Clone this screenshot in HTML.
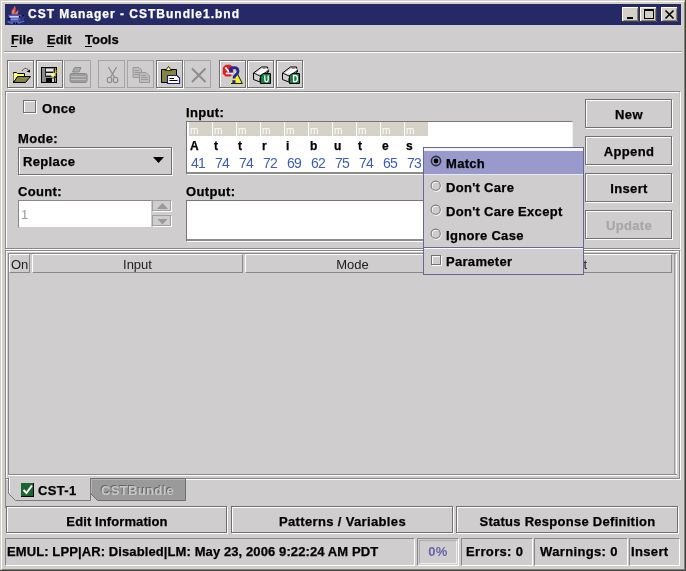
<!DOCTYPE html>
<html><head><meta charset="utf-8">
<style>
*{margin:0;padding:0;box-sizing:border-box}
html,body{width:686px;height:571px;overflow:hidden;background:#d4d0c8}
body{position:relative;will-change:transform;font-family:"Liberation Sans",sans-serif;font-size:13px;color:#000}
.a{position:absolute}
.t{position:absolute;white-space:nowrap;line-height:1}
.b{font-weight:bold;letter-spacing:0.35px;-webkit-text-stroke:0.25px currentColor}
/* etched: dark rect + white rect offset */
.etch{position:absolute}
.etch:before,.etch:after{content:"";position:absolute}
.etch:before{left:1px;top:1px;right:0;bottom:0;border:1px solid #fff}
.etch:after{left:0;top:0;right:1px;bottom:1px;border:1px solid #888}
.btn{position:absolute}
.btn:before{content:"";position:absolute;left:1px;top:1px;right:0;bottom:0;border:1px solid #fff}
.btn:after{content:"";position:absolute;left:0;top:0;right:1px;bottom:1px;border:1px solid #707070}
.lbl{position:absolute;left:0;right:0;text-align:center;font-weight:bold;letter-spacing:0.35px;-webkit-text-stroke:0.25px currentColor;white-space:nowrap;line-height:1;z-index:2}
</style></head><body>
<!-- window frame -->
<div class="a" style="left:0;top:0;width:686px;height:571px;border-right:1px solid #404040;border-bottom:1px solid #404040"></div>
<div class="a" style="left:1px;top:1px;width:684px;height:569px;border-left:1px solid #fff;border-top:1px solid #fff;border-right:1px solid #808080;border-bottom:1px solid #808080"></div>
<!-- client -->
<div class="a" style="left:4px;top:25px;width:678px;height:542px;background:#cfcdcd"></div>
<!-- title bar -->
<div class="a" style="left:5px;top:4px;width:676px;height:21px;background:#252a66"></div>
<div class="t b" style="left:28px;top:8px;font-size:12px;letter-spacing:1px;color:#fff">CST Manager - CSTBundle1.bnd</div>


<svg class="a" style="left:0;top:0;z-index:3" width="686" height="52">
<!-- java cup -->
<path d="M12 14.5Q10.5 11.5 12.5 9.5Q14 8 14.6 5.5Q16.5 8 15.5 10.5Q15 12 16 13Q17 11 18.3 9.5Q18.8 12 17.5 14.5Z" fill="#e05a48"/>
<path d="M13 13.5Q12.5 11.5 14 10M16.5 13.5Q16.5 12.2 17.6 11" stroke="#f7b090" stroke-width="0.7" fill="none"/>
<path d="M8 15Q14 13.5 21.5 15L19 22H11Z" fill="#4c58b8"/>
<path d="M9.5 16.8H19.5" stroke="#d8dcff" stroke-width="1.4"/>
<path d="M11 19.3H18" stroke="#8a96dc" stroke-width="1.2"/>
<path d="M20 17Q23 15 23.8 16Q24.5 18.5 19.5 20.5" fill="none" stroke="#3a46a8" stroke-width="1.2"/>
<circle cx="23.2" cy="15.6" r="0.9" fill="#000"/><circle cx="19.6" cy="16.8" r="0.9" fill="#000"/>
<circle cx="9.4" cy="18.6" r="0.9" fill="#000"/>
<path d="M7.5 21.5Q15 25.5 24 21" fill="none" stroke="#5a66c4" stroke-width="1.6"/>
<circle cx="14" cy="23.3" r="0.9" fill="#000"/><circle cx="16.6" cy="23.3" r="0.9" fill="#000"/>
<!-- window buttons -->
<g>
<rect x="622" y="7" width="17" height="15" fill="#d4d0c8"/>
<path d="M622.5 21.5V7.5H638.5" fill="none" stroke="#fff"/>
<path d="M622 21.5H638.5V7" fill="none" stroke="#404040"/>
<path d="M623.5 20.5H637.5V8.5" fill="none" stroke="#808080"/>
<rect x="627" y="17" width="6" height="2" fill="#000"/>
</g>
<g>
<rect x="640" y="7" width="17" height="15" fill="#d4d0c8"/>
<path d="M640.5 21.5V7.5H656.5" fill="none" stroke="#fff"/>
<path d="M640 21.5H656.5V7" fill="none" stroke="#404040"/>
<path d="M641.5 20.5H655.5V8.5" fill="none" stroke="#808080"/>
<rect x="644.5" y="9.5" width="9" height="9" fill="none" stroke="#000"/><rect x="644" y="9" width="10" height="2" fill="#000"/>
</g>
<g>
<rect x="661" y="7" width="17" height="15" fill="#d4d0c8"/>
<path d="M661.5 21.5V7.5H677.5" fill="none" stroke="#fff"/>
<path d="M661 21.5H677.5V7" fill="none" stroke="#404040"/>
<path d="M662.5 20.5H676.5V8.5" fill="none" stroke="#808080"/>
<path d="M665.5 10.5L673.5 18.5M673.5 10.5L665.5 18.5" stroke="#000" stroke-width="1.7"/>
</g>
<!-- menu underlines -->
<rect x="11" y="46" width="6" height="1" fill="#000"/>
<rect x="47" y="46" width="7" height="1" fill="#000"/>
<rect x="85" y="46" width="7" height="1" fill="#000"/>
</svg>

<!-- menu -->
<div class="t b" style="left:11px;top:33px;letter-spacing:0">File</div>
<div class="t b" style="left:47px;top:33px;letter-spacing:0">Edit</div>
<div class="t b" style="left:85px;top:33px;letter-spacing:0">Tools</div>
<div class="a" style="left:4px;top:51px;width:678px;height:1px;background:#999"></div>
<div class="a" style="left:4px;top:52px;width:678px;height:1px;background:#fff"></div>

<!-- toolbar buttons -->
<div class="btn" style="left:7px;top:60px;width:28px;height:29px"></div>
<div class="btn" style="left:36px;top:60px;width:28px;height:29px"></div>
<div class="a" style="left:64px;top:60px;width:27px;height:28px;border:1px solid #a4a4a4"></div>
<div class="a" style="left:98px;top:60px;width:27px;height:28px;border:1px solid #a4a4a4"></div>
<div class="a" style="left:127px;top:60px;width:27px;height:28px;border:1px solid #a4a4a4"></div>
<div class="btn" style="left:156px;top:60px;width:28px;height:29px"></div>
<div class="a" style="left:184px;top:60px;width:27px;height:28px;border:1px solid #a4a4a4"></div>
<div class="btn" style="left:219px;top:60px;width:28px;height:29px"></div>
<div class="btn" style="left:247px;top:60px;width:28px;height:29px"></div>
<div class="btn" style="left:276px;top:60px;width:28px;height:29px"></div>
<svg class="a" style="left:0;top:0;z-index:3" width="320" height="95" shape-rendering="geometricPrecision">
<!-- open folder -->
<path d="M13.5 72.5H16.5L17.5 73.5H24.5V76.5H18L13.5 82.5Z" fill="#ffff70" stroke="#000"/>
<path d="M14 73.5V81" stroke="#ffffe0" stroke-width="1"/>
<path d="M17.5 76.5H30.5L25.5 82.5H13.5Z" fill="#84843c" stroke="#000"/>
<path d="M22 71Q25 66.5 28.5 70" fill="none" stroke="#222" stroke-width="1" stroke-dasharray="1.4 0.6"/>
<path d="M26.5 71.5L30 69.5L30 72.5Z" fill="#000"/>
<!-- save -->
<rect x="41" y="67" width="16" height="16" fill="#000"/>
<rect x="42" y="68" width="14" height="14" fill="#8a8a8a"/>
<rect x="45" y="68" width="1" height="8" fill="#222"/>
<rect x="46" y="69" width="7" height="2" fill="#e8e8e8"/>
<rect x="46" y="72" width="7" height="1" fill="#111"/>
<rect x="46" y="73" width="7" height="2" fill="#e0e0e0"/>
<rect x="45" y="76" width="9" height="1" fill="#222"/>
<rect x="46" y="78" width="6" height="5" fill="#000"/>
<rect x="52" y="79" width="2" height="3" fill="#d0d0d0"/>
<rect x="54" y="68" width="1" height="14" fill="#222"/>
<path d="M59.5 68.5L54 74" stroke="#e8e820" stroke-width="1.6" stroke-dasharray="1.3 0.9"/>
<circle cx="53" cy="75" r="2" fill="#ffff80"/>
<path d="M54.5 76.5L56 77.5" stroke="#000" stroke-width="1"/>
<!-- printer disabled -->
<path d="M74.5 67.5H81L79 72H72.5Z" fill="#a8a8a8" stroke="#8c8c8c"/>
<path d="M71 73.5Q70 73.5 70 75V80.5Q70 82.5 72 82.5H85.5Q87 82.5 87 80.5V75Q87 73.5 85.5 73.5Z" fill="#9c9c9c" stroke="#8c8c8c"/>
<path d="M71 76.5H86M71 79.5H86" stroke="#bbb"/>
<!-- scissors disabled -->
<path d="M108.5 67L114.5 77.5M116.5 67L110.5 77.5" stroke="#8c8c8c" stroke-width="1.2" fill="none"/>
<ellipse cx="109.5" cy="80" rx="2.3" ry="2.7" fill="none" stroke="#8c8c8c" stroke-width="1.1"/>
<ellipse cx="115.5" cy="80" rx="2.3" ry="2.7" fill="none" stroke="#8c8c8c" stroke-width="1.1"/>
<!-- copy disabled -->
<path d="M133 67.5H139L141.5 70V77.5H133Z" fill="#bdbdbd" stroke="#9a9a9a"/>
<path d="M134.5 70.5H139M134.5 72.5H140M134.5 74.5H140" stroke="#9a9a9a"/>
<path d="M139.5 72.5H146L149.5 76V82.5H139.5Z" fill="#bdbdbd" stroke="#9a9a9a"/>
<path d="M141 75.5H146M141 77.5H148M141 79.5H148" stroke="#9a9a9a"/>
<!-- paste -->
<path d="M161.5 69.5H176.5V82.5H161.5Z" fill="#84843c" stroke="#000"/>
<path d="M165.5 70.5L168.5 66.5L171.5 70.5Z" fill="#ffff80" stroke="#000" stroke-width="0.8"/>
<path d="M167.5 75.5H177L179.5 78V83.5H167.5Z" fill="#fff" stroke="#1a1a80" stroke-width="1.2"/>
<path d="M169.5 78.5H174M169.5 80.5H177.5" stroke="#000"/>
<!-- delete disabled -->
<path d="M192 68.5L205.5 82M205.5 68.5L192 82" stroke="#8c8c8c" stroke-width="2"/>
<!-- icon 8 -->
<path d="M225.6 64.7H230.4L233.2 67.5V73.8L230.4 76.6H225.6L222.8 73.8V67.5Z" fill="#e41c1c"/>
<path d="M226 68.2L228.8 71.8M225.8 73.4H231.8" stroke="#fff" stroke-width="1.8" fill="none"/>
<circle cx="225.9" cy="68.1" r="1.1" fill="#fff"/><circle cx="232" cy="73.4" r="1.1" fill="#fff"/>
<path d="M229.5 83.5L237.7 74.3L242.3 83.5Z" fill="#f2f224"/>
<path d="M237.7 74.3L242.3 83.5H231" fill="none" stroke="#000" stroke-width="0.9"/>
<path d="M230.3 71Q230.3 67.6 234 67.6Q238 67.6 238 71.2Q238 73.6 235.8 75Q234 76.2 234 78.6" fill="none" stroke="#222a8c" stroke-width="2.8"/>
<rect x="229.5" y="70" width="3.2" height="2.6" fill="#222a8c"/>
<rect x="232.3" y="80.2" width="3.2" height="3.2" fill="#222a8c"/>
<!-- icon 9/10 -->
<g id="dev">
<path d="M253.5 73L261.5 67H267.5L268.5 72L260 78V82L253.5 79.5Z" fill="#d2d2d2" stroke="#000" stroke-width="1"/><path d="M257 73.5L262.5 69.5H266.5L260 74" stroke="#fff" stroke-width="1.6" fill="none"/>
<path d="M253.5 73L260 76L268 71" fill="none" stroke="#000" stroke-width="0.9"/>
<path d="M263 68.5L266 68" stroke="#888" stroke-width="1.2"/>
<path d="M263 73.5H270.5V83.5H260.5V76Z" fill="#168040" stroke="#000" stroke-width="1"/>
</g>
<path d="M264.8 75.5V80Q264.8 81.8 266.5 81.8Q268.2 81.8 268.2 80V75.5" fill="none" stroke="#fff" stroke-width="1.3"/>
<g transform="translate(29,0)">
<path d="M253.5 73L261.5 67H267.5L268.5 72L260 78V82L253.5 79.5Z" fill="#d2d2d2" stroke="#000" stroke-width="1"/><path d="M257 73.5L262.5 69.5H266.5L260 74" stroke="#fff" stroke-width="1.6" fill="none"/>
<path d="M253.5 73L260 76L268 71" fill="none" stroke="#000" stroke-width="0.9"/>
<path d="M263 68.5L266 68" stroke="#888" stroke-width="1.2"/>
<path d="M263 73.5H270.5V83.5H260.5V76Z" fill="#168040" stroke="#000" stroke-width="1"/>
<path d="M264.6 75.5V81.7H266.3Q268.4 81.7 268.4 78.6Q268.4 75.5 266.3 75.5Z" fill="none" stroke="#fff" stroke-width="1.3"/>
</g>
</svg>

<!-- top panel -->
<div class="etch" style="left:5px;top:91px;width:676px;height:159px"></div>
<div class="a" style="left:679px;top:92px;width:1px;height:156px;background:#c4c4c4"></div>


<!-- top panel contents -->
<div class="btn" style="left:23px;top:100px;width:14px;height:14px"></div>
<div class="t b" style="left:42px;top:102px">Once</div>
<div class="t b" style="left:18px;top:132px">Mode:</div>
<div class="btn" style="left:18px;top:147px;width:155px;height:29px"></div>
<div class="t b" style="left:23px;top:155px">Replace</div>
<svg class="a" style="left:153px;top:157px" width="12" height="7"><path d="M0 0H11L5.5 6Z" fill="#000"/></svg>
<div class="t b" style="left:18px;top:185px">Count:</div>
<div class="a" style="left:18px;top:200px;width:134px;height:28px;background:#fff;border-left:1px solid #888;border-top:1px solid #888;border-right:1px solid #ccc;border-bottom:1px solid #ccc"></div>
<div class="t" style="left:21px;top:208px;color:#999">1</div>
<div class="a" style="left:153px;top:201px;width:19px;height:11px;border-right:1px solid #fff;border-bottom:1px solid #fff"></div>
<div class="a" style="left:152px;top:200px;width:19px;height:11px;border:1px solid #a0a0a0"></div>
<div class="a" style="left:153px;top:216px;width:19px;height:11px;border-right:1px solid #fff;border-bottom:1px solid #fff"></div>
<div class="a" style="left:152px;top:215px;width:19px;height:11px;border:1px solid #a0a0a0"></div>
<svg class="a" style="left:156px;top:202px" width="13" height="8"><path d="M1 7H12L6.5 1Z" fill="#999"/></svg>
<svg class="a" style="left:156px;top:218px" width="13" height="8"><path d="M1.5 1H11.5L6.5 6.5Z" fill="#999"/></svg>

<div class="t b" style="left:186px;top:106px">Input:</div>
<div class="a" style="left:186px;top:121px;width:387px;height:54px;background:#fff;border-left:1px solid #777;border-top:1px solid #777;border-right:1px solid #eee;border-bottom:1px solid #fff;box-shadow:inset 0 -2px 0 #8c8c8c"></div>
<div class="t b" style="left:186px;top:185px">Output:</div>
<div class="a" style="left:186px;top:200px;width:387px;height:42px;background:#fff;border-left:1px solid #777;border-top:1px solid #777;border-right:1px solid #eee;border-bottom:1px solid #fff;box-shadow:inset 0 -2px 0 #8c8c8c"></div>
<div class="a" style="left:189px;top:122px;width:23px;height:14px;background:#d6d2ca"></div><div class="t" style="left:190px;top:126px;font-size:10px;color:#fff">m</div><div class="t b" style="left:190px;top:140px;font-size:12px">A</div><div class="t" style="left:191px;top:156px;font-size:14px;letter-spacing:-0.7px;color:#3c5cb8">41</div>
<div class="a" style="left:213px;top:122px;width:23px;height:14px;background:#d6d2ca"></div><div class="t" style="left:214px;top:126px;font-size:10px;color:#fff">m</div><div class="t b" style="left:214px;top:140px;font-size:12px">t</div><div class="t" style="left:215px;top:156px;font-size:14px;letter-spacing:-0.7px;color:#3c5cb8">74</div>
<div class="a" style="left:237px;top:122px;width:23px;height:14px;background:#d6d2ca"></div><div class="t" style="left:238px;top:126px;font-size:10px;color:#fff">m</div><div class="t b" style="left:238px;top:140px;font-size:12px">t</div><div class="t" style="left:239px;top:156px;font-size:14px;letter-spacing:-0.7px;color:#3c5cb8">74</div>
<div class="a" style="left:261px;top:122px;width:23px;height:14px;background:#d6d2ca"></div><div class="t" style="left:262px;top:126px;font-size:10px;color:#fff">m</div><div class="t b" style="left:262px;top:140px;font-size:12px">r</div><div class="t" style="left:263px;top:156px;font-size:14px;letter-spacing:-0.7px;color:#3c5cb8">72</div>
<div class="a" style="left:285px;top:122px;width:23px;height:14px;background:#d6d2ca"></div><div class="t" style="left:286px;top:126px;font-size:10px;color:#fff">m</div><div class="t b" style="left:286px;top:140px;font-size:12px">i</div><div class="t" style="left:287px;top:156px;font-size:14px;letter-spacing:-0.7px;color:#3c5cb8">69</div>
<div class="a" style="left:309px;top:122px;width:23px;height:14px;background:#d6d2ca"></div><div class="t" style="left:310px;top:126px;font-size:10px;color:#fff">m</div><div class="t b" style="left:310px;top:140px;font-size:12px">b</div><div class="t" style="left:311px;top:156px;font-size:14px;letter-spacing:-0.7px;color:#3c5cb8">62</div>
<div class="a" style="left:333px;top:122px;width:23px;height:14px;background:#d6d2ca"></div><div class="t" style="left:334px;top:126px;font-size:10px;color:#fff">m</div><div class="t b" style="left:334px;top:140px;font-size:12px">u</div><div class="t" style="left:335px;top:156px;font-size:14px;letter-spacing:-0.7px;color:#3c5cb8">75</div>
<div class="a" style="left:357px;top:122px;width:23px;height:14px;background:#d6d2ca"></div><div class="t" style="left:358px;top:126px;font-size:10px;color:#fff">m</div><div class="t b" style="left:358px;top:140px;font-size:12px">t</div><div class="t" style="left:359px;top:156px;font-size:14px;letter-spacing:-0.7px;color:#3c5cb8">74</div>
<div class="a" style="left:381px;top:122px;width:23px;height:14px;background:#d6d2ca"></div><div class="t" style="left:382px;top:126px;font-size:10px;color:#fff">m</div><div class="t b" style="left:382px;top:140px;font-size:12px">e</div><div class="t" style="left:383px;top:156px;font-size:14px;letter-spacing:-0.7px;color:#3c5cb8">65</div>
<div class="a" style="left:405px;top:122px;width:23px;height:14px;background:#d6d2ca"></div><div class="t" style="left:406px;top:126px;font-size:10px;color:#fff">m</div><div class="t b" style="left:406px;top:140px;font-size:12px">s</div><div class="t" style="left:407px;top:156px;font-size:14px;letter-spacing:-0.7px;color:#3c5cb8">73</div>
<div class="btn" style="left:585px;top:99px;width:88px;height:30px"><div class="lbl" style="top:9px;">New</div></div>
<div class="btn" style="left:585px;top:136px;width:88px;height:30px"><div class="lbl" style="top:9px;">Append</div></div>
<div class="btn" style="left:585px;top:173px;width:88px;height:30px"><div class="lbl" style="top:9px;">Insert</div></div>
<div class="btn" style="left:585px;top:210px;width:88px;height:30px"><div class="lbl" style="top:9px;color:#a8a8a8;">Update</div></div>

<!-- panel 2 -->
<div class="etch" style="left:5px;top:250px;width:676px;height:230px"></div>
<div class="a" style="left:8px;top:478px;width:83px;height:2px;background:#cfcdcd"></div>
<div class="a" style="left:5px;top:478px;width:1px;height:30px;background:#888"></div>


<!-- table -->
<div class="a" style="left:8px;top:253px;width:669px;height:222px;border-left:1px solid #888;border-top:1px solid #888;border-right:1px solid #fff"></div>
<div class="a" style="left:674px;top:254px;width:1px;height:220px;background:#999"></div>
<div class="a" style="left:9px;top:254px;width:21px;height:19px;border-left:1px solid #fff;border-top:1px solid #fff;border-right:1px solid #888;border-bottom:1px solid #888"></div>
<div class="a" style="left:32px;top:254px;width:211px;height:19px;border-left:1px solid #fff;border-top:1px solid #fff;border-right:1px solid #888;border-bottom:1px solid #888"></div>
<div class="a" style="left:245px;top:254px;width:215px;height:19px;border-left:1px solid #fff;border-top:1px solid #fff;border-right:1px solid #888;border-bottom:1px solid #888"></div>
<div class="a" style="left:462px;top:254px;width:210px;height:19px;border-left:1px solid #fff;border-top:1px solid #fff;border-right:1px solid #888;border-bottom:1px solid #888"></div>
<div class="t" style="left:11px;top:258px;color:#222">On</div>
<div class="t" style="left:32px;top:258px;width:211px;text-align:center;color:#222">Input</div>
<div class="t" style="left:245px;top:258px;width:215px;text-align:center;color:#222">Mode</div>
<div class="t" style="left:462px;top:258px;width:211px;text-align:center;color:#222">Output</div>
<div class="a" style="left:8px;top:474px;width:669px;height:1px;background:#888"></div>
<div class="a" style="left:8px;top:475px;width:669px;height:1px;background:#fff"></div>
<!-- tabs -->
<svg class="a" style="left:0;top:470px" width="200" height="40">
 <path d="M90.5 8.5H185.5V30.5H97.5L90.5 23.5Z" fill="#9a9a9a" stroke="#6e6e6e" stroke-width="1"/>
 <path d="M91.5 23V9.5H185" fill="none" stroke="#b4b4b4" stroke-width="1"/>
 <path d="M8.5 8V23.5L15.5 30.5H90.5V8" fill="#cfcdcd" stroke="#7a7a7a" stroke-width="1"/>
 <path d="M9.5 8V23" fill="none" stroke="#fff" stroke-width="1"/>
</svg>
<div class="a" style="left:21px;top:483px;width:13px;height:14px;background:#000"></div>
<div class="a" style="left:21px;top:483px;width:12px;height:13px;background:#1a6430"></div>
<svg class="a" style="left:21px;top:483px" width="13" height="13"><path d="M2.5 7L5.5 10L11 2.5" fill="none" stroke="#fff" stroke-width="2"/></svg>
<div class="t b" style="left:38px;top:484px">CST-1</div>
<div class="t b" style="left:100px;top:483px;color:#666;-webkit-text-stroke:0">CSTBundle</div>
<div class="t b" style="left:101px;top:484px;color:#c8c8c8;-webkit-text-stroke:0">CSTBundle</div>

<!-- status bar -->
<div class="a" style="left:5px;top:538px;width:410px;height:28px;border-left:1px solid #888;border-top:1px solid #888;border-right:1px solid #fff;border-bottom:1px solid #fff"></div><div class="t b" style="left:7px;top:545px;letter-spacing:0.1px">EMUL: LPP|AR: Disabled|LM: May 23, 2006 9:22:24 AM PDT</div>
<div class="a" style="left:461px;top:538px;width:72px;height:28px;border-left:1px solid #888;border-top:1px solid #888;border-right:1px solid #fff;border-bottom:1px solid #fff"></div><div class="t b" style="left:466px;top:545px">Errors: 0</div>
<div class="a" style="left:534px;top:538px;width:94px;height:28px;border-left:1px solid #888;border-top:1px solid #888;border-right:1px solid #fff;border-bottom:1px solid #fff"></div><div class="t b" style="left:540px;top:545px">Warnings: 0</div>
<div class="a" style="left:629px;top:538px;width:51px;height:28px;border-left:1px solid #888;border-top:1px solid #888;border-right:1px solid #fff;border-bottom:1px solid #fff"></div><div class="t b" style="left:631px;top:545px">Insert</div>
<div class="a" style="left:417px;top:538px;width:42px;height:28px;border-left:1px solid #888;border-top:1px solid #888;border-right:1px solid #fff;border-bottom:1px solid #fff"></div><div class="a" style="left:419px;top:540px;width:38px;height:24px;border-left:1px solid #aaa;border-top:1px solid #aaa;border-right:1px solid #eee;border-bottom:1px solid #eee"></div><div class="t b" style="left:417px;top:545px;width:42px;text-align:center;color:#6464a8;-webkit-text-stroke:0">0%</div>

<!-- bottom buttons -->
<div class="btn" style="left:6px;top:506px;width:222px;height:28px"><div class="lbl" style="top:9px;letter-spacing:0.1px">Edit Information</div></div>
<div class="btn" style="left:231px;top:506px;width:223px;height:28px"><div class="lbl" style="top:9px">Patterns / Variables</div></div>
<div class="btn" style="left:456px;top:506px;width:223px;height:28px"><div class="lbl" style="top:9px;letter-spacing:0.27px">Status Response Definition</div></div>


<!-- popup -->
<div class="a" style="left:423px;top:147px;width:161px;height:128px;background:#cfcdcd;border:1px solid #666699;z-index:10">
 <div class="a" style="left:0;top:0;width:159px;height:3px;background:#f4f4fa"></div>
 <div class="a" style="left:0;top:3px;width:159px;height:23px;background:#9999cc"></div>
 <div class="a" style="left:0;top:26px;width:159px;height:1px;background:#e8e8f0"></div>
 <div class="a" style="left:0;top:99px;width:159px;height:1px;background:#666699"></div>
 <div class="a" style="left:0;top:100px;width:159px;height:1px;background:#fff"></div>
 <svg class="a" style="left:6px;top:7px" width="13" height="13"><circle cx="6" cy="6" r="4.6" fill="none" stroke="#303040" stroke-width="1.6"/><circle cx="6" cy="6" r="2.4" fill="#000"/></svg>
 <svg class="a" style="left:6px;top:32px" width="13" height="13"><circle cx="6.5" cy="6.5" r="4.6" fill="none" stroke="#fff" stroke-width="1.1"/><circle cx="5.7" cy="5.7" r="4.6" fill="none" stroke="#7a7a7a" stroke-width="1.1"/></svg>
 <svg class="a" style="left:6px;top:56px" width="13" height="13"><circle cx="6.5" cy="6.5" r="4.6" fill="none" stroke="#fff" stroke-width="1.1"/><circle cx="5.7" cy="5.7" r="4.6" fill="none" stroke="#7a7a7a" stroke-width="1.1"/></svg>
 <svg class="a" style="left:6px;top:80px" width="13" height="13"><circle cx="6.5" cy="6.5" r="4.6" fill="none" stroke="#fff" stroke-width="1.1"/><circle cx="5.7" cy="5.7" r="4.6" fill="none" stroke="#7a7a7a" stroke-width="1.1"/></svg>
 <div class="btn" style="left:7px;top:107px;width:11px;height:11px"></div>
 <div class="t b" style="left:22px;top:9px;letter-spacing:0.3px">Match</div>
 <div class="t b" style="left:22px;top:33px;letter-spacing:0.3px">Don't Care</div>
 <div class="t b" style="left:22px;top:57px;letter-spacing:0.3px">Don't Care Except</div>
 <div class="t b" style="left:22px;top:81px;letter-spacing:0.3px">Ignore Case</div>
 <div class="t b" style="left:22px;top:107px;letter-spacing:0.3px">Parameter</div>
</div>
</body></html>
